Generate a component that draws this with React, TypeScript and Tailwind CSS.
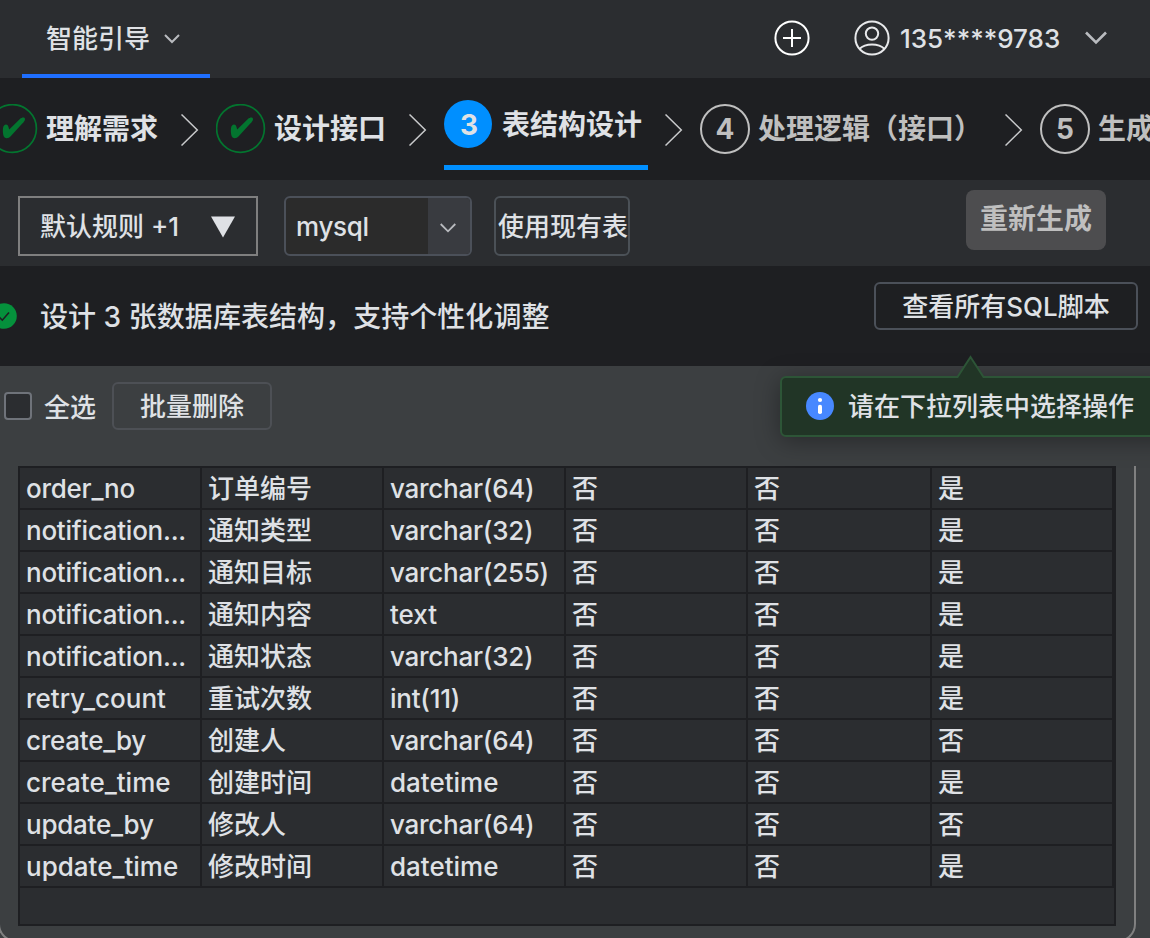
import React from 'react';
import clsx from 'clsx';

type Column = {
  name: string;
  comment: string;
  type: string;
  flags: string[];
};

const columns: Column[] = [
  { name: 'order_no', comment: '订单编号', type: 'varchar(64)', flags: ['否', '否', '是'] },
  { name: 'notification...', comment: '通知类型', type: 'varchar(32)', flags: ['否', '否', '是'] },
  { name: 'notification...', comment: '通知目标', type: 'varchar(255)', flags: ['否', '否', '是'] },
  { name: 'notification...', comment: '通知内容', type: 'text', flags: ['否', '否', '是'] },
  { name: 'notification...', comment: '通知状态', type: 'varchar(32)', flags: ['否', '否', '是'] },
  { name: 'retry_count', comment: '重试次数', type: 'int(11)', flags: ['否', '否', '是'] },
  { name: 'create_by', comment: '创建人', type: 'varchar(64)', flags: ['否', '否', '否'] },
  { name: 'create_time', comment: '创建时间', type: 'datetime', flags: ['否', '否', '是'] },
  { name: 'update_by', comment: '修改人', type: 'varchar(64)', flags: ['否', '否', '否'] },
  { name: 'update_time', comment: '修改时间', type: 'datetime', flags: ['否', '否', '是'] },
];

function StepArrow() {
  return (
    <svg className="mt-9 mr-[17px] h-8 w-[18px] shrink-0" viewBox="0 0 18 32" fill="none" stroke="#c9cacc" strokeWidth="1.5">
      <path d="M0.5 0.5 L16.3 16 L0.5 31.5" />
    </svg>
  );
}

function DoneStep({ label }: { label: string }) {
  return (
    <div className="mt-[25px] mr-[23px] flex h-[51px] shrink-0 items-center gap-2">
      <svg className="size-[50px]" viewBox="0 0 50 50" fill="none">
        <circle cx="24.5" cy="24.5" r="23.9" stroke="#03752f" strokeWidth="1.7" />
        <path
          d="M15 24.2 C15.5 20 19.5 19.4 20.4 22.8 L21.2 25.6 L31.9 15 C34 13.2 37.2 12.8 37 15.4 C36.9 16.8 35.5 18.2 34.3 19.6 L22.7 32.3 C20.5 34.8 16.2 35.2 15.3 31 C14.8 28.4 14.8 26.2 15 24.2 Z"
          fill="#03752f"
        />
      </svg>
      <span className="text-[28px] font-bold text-[#dfe1e5]">{label}</span>
    </div>
  );
}

function PendingStep({ no, label }: { no: number; label: string }) {
  return (
    <div className="mt-[25px] mr-[23px] flex h-[51px] shrink-0 items-center gap-2 text-[28px] font-bold text-[#bfbfbf]">
      <div className="flex size-[50px] items-center justify-center rounded-full border-2 border-[#bfbfbf]">{no}</div>
      <span>{label}</span>
    </div>
  );
}

export default function App() {
  return (
    <div className="flex h-[938px] w-[1150px] flex-col overflow-hidden bg-[#3c3f41] font-['Inter','Noto_Sans_CJK_SC',sans-serif] text-[26px] leading-none font-[450] whitespace-nowrap text-[#dfe1e5]">
      {/* Top bar */}
      <header className="flex h-[78px] shrink-0 justify-between bg-[#2b2d30] pl-[22px]">
        <div className="flex w-[188px] items-center gap-[14px] border-b-4 border-[#1f6fff] pt-[3px] pl-6">
          <span>智能引导</span>
          <svg className="h-[10px] w-4" viewBox="0 0 16 10" fill="none" stroke="#b9bbbf" strokeWidth="2">
            <path d="M1 1 L8 8 L15 1" />
          </svg>
        </div>
        <div className="flex items-center pr-[42px] pb-0.5">
          <svg className="mr-11 size-9" viewBox="0 0 36 36" fill="none" stroke="#ffffff" strokeWidth="2">
            <circle cx="18" cy="18" r="16.6" />
            <path d="M18 9 V27 M9 18 H27" />
          </svg>
          <svg className="mr-[10px] size-9" viewBox="0 0 36 36" fill="none" stroke="#e8e9eb" strokeWidth="2">
            <circle cx="18" cy="18" r="16.6" />
            <circle cx="18" cy="13.6" r="6.2" />
            <path d="M5.4 29 C11.5 23 24.5 23 30.6 29" />
          </svg>
          <span className="w-[159px] pt-0.5">135****9783</span>
          <svg className="ml-[25px] h-[14px] w-6" viewBox="0 0 24 14" fill="none" stroke="#b9bbbf" strokeWidth="2.6">
            <path d="M2 1.5 L12 11.5 L22 1.5" />
          </svg>
        </div>
      </header>

      {/* Steps */}
      <nav className="-ml-3 flex h-[102px] shrink-0 items-start bg-[#1e1f22]">
        <DoneStep label="理解需求" />
        <StepArrow />
        <DoneStep label="设计接口" />
        <StepArrow />
        <div className="mr-[17px] flex h-[92px] w-[204px] shrink-0 items-start gap-[10px] border-b-5 border-[#008fff] pt-[22px] text-[28px] font-bold">
          <div className="flex size-12 items-center justify-center rounded-full bg-[#008fff] pt-px pl-0.5">3</div>
          <span className="flex h-12 items-center pt-0.5">表结构设计</span>
        </div>
        <StepArrow />
        <PendingStep no={4} label="处理逻辑（接口）" />
        <StepArrow />
        <PendingStep no={5} label="生成" />
      </nav>

      {/* Toolbar */}
      <div className="flex h-[86px] shrink-0 items-start bg-[#2b2d30] pt-4 pl-[18px]">
        <button className="flex h-[60px] w-[240px] items-center justify-between border-2 border-[#7f7f7f] pr-[21px] pl-5">
          <span className="pt-0.5">默认规则 +1</span>
          <svg className="mt-0.5 h-[22px] w-6" viewBox="0 0 24 22">
            <path d="M0 0.5 H24 L12 21.5 Z" fill="#dfe1e5" />
          </svg>
        </button>
        <div className="ml-[26px] flex h-[60px] w-[188px] overflow-hidden rounded-md border-2 border-[#4b5059] bg-[#2b2b2b]">
          <span className="flex flex-1 items-center pt-0.5 pl-[10px] tracking-[-0.3px]">mysql</span>
          <div className="flex w-[42px] items-center justify-center bg-[#393b40] pr-0.5">
            <svg className="mt-1 h-[10px] w-4" viewBox="0 0 16 10" fill="none" stroke="#b9bbbf" strokeWidth="1.8">
              <path d="M0.7 1 L8 8.3 L15.3 1" />
            </svg>
          </div>
        </div>
        <button className="ml-[22px] flex h-[60px] w-[136px] items-center rounded-md border-2 border-[#4b5157] pt-0.5 pl-0.5">使用现有表</button>
        <button className="-mt-1.5 ml-auto mr-11 flex h-[60px] w-[140px] justify-center rounded-lg bg-[#4d4d4f] pt-[15px] text-[28px] font-bold text-[#bfbfbf]">
          重新生成
        </button>
      </div>

      {/* Result summary */}
      <div className="relative flex h-[100px] shrink-0 items-start bg-[#1e1f22]">
        <svg className="mt-[37px] -ml-[9px] size-[26px]" viewBox="0 0 26 26">
          <circle cx="13" cy="13" r="12.8" fill="#05913c" />
          <path d="M6.5 12.5 L11.3 17.2 L18 9.5" fill="none" stroke="#1e1f22" strokeWidth="1.6" />
        </svg>
        <span className="mt-[37px] ml-[23px] text-[28px] tracking-[0.05px]">设计 3 张数据库表结构，支持个性化调整</span>
        <button className="mt-4 mr-3 ml-auto flex h-12 w-[264px] items-center justify-center rounded-md border-2 border-[#4b5059] pt-0.5">
          查看所有SQL脚本
        </button>

        {/* Hint balloon */}
        <div className="absolute top-[110px] left-[780px] z-10 flex h-[61px] w-[400px] items-center rounded-md border-2 border-[#2d5537] bg-[#213526] pl-6 shadow-[0_4px_24px_rgba(0,0,0,0.35)]">
          <svg className="absolute -top-[23px] left-[173px] h-6 w-8" viewBox="0 0 32 24">
            <path d="M2.5 22 L15.5 2 L28.5 22 V24 H2.5 Z" fill="#213526" />
            <path d="M1 22 H2.5 L15.5 2 L28.5 22 H31" fill="none" stroke="#2d5537" strokeWidth="2" />
          </svg>
          <svg className="-mt-px size-7" viewBox="0 0 28 28">
            <circle cx="14" cy="14" r="14" fill="#4788ff" />
            <circle cx="14" cy="8" r="2.1" fill="#fff" />
            <rect x="12" y="12.8" width="4" height="9.2" rx="1.8" fill="#fff" />
          </svg>
          <span className="ml-[14px] pt-px">请在下拉列表中选择操作</span>
        </div>
      </div>

      {/* Bulk actions */}
      <div className="flex h-[100px] shrink-0 items-start pt-4 pl-1">
        <div className="mt-[10px] size-7 rounded-[4px] border-2 border-[#6f737a] bg-[#2b2d30]" />
        <span className="mt-[13px] ml-3">全选</span>
        <button className="ml-4 flex h-12 w-40 items-center justify-center rounded-md border-2 border-[#4d5055] pt-0.5">批量删除</button>
      </div>

      {/* Column definitions */}
      <div className="-ml-0.5 h-[476px] w-[1138px] shrink-0 rounded-b-[18px] border-2 border-t-0 border-[#808080] pl-[18px]">
        <div className="flex h-[460px] w-[1098px] flex-col gap-0.5 bg-[#1e1f22] p-0.5">
          {columns.map((col, i) => (
            <div key={i} className="grid h-10 shrink-0 grid-cols-[180px_180px_180px_180px_182px_180px] gap-0.5">
              {[col.name, col.comment, col.type, ...col.flags].map((text, j) => (
                <div
                  key={j}
                  className={clsx(
                    'flex items-center overflow-hidden bg-[#2b2d30] pt-0.5 pl-1.5',
                    /[(.]|_[bn]/.test(text) && 'tracking-[-0.25px]'
                  )}
                >
                  {text}
                </div>
              ))}
            </div>
          ))}
          <div className="flex-1 bg-[#2b2d30]" />
        </div>
      </div>
    </div>
  );
}
